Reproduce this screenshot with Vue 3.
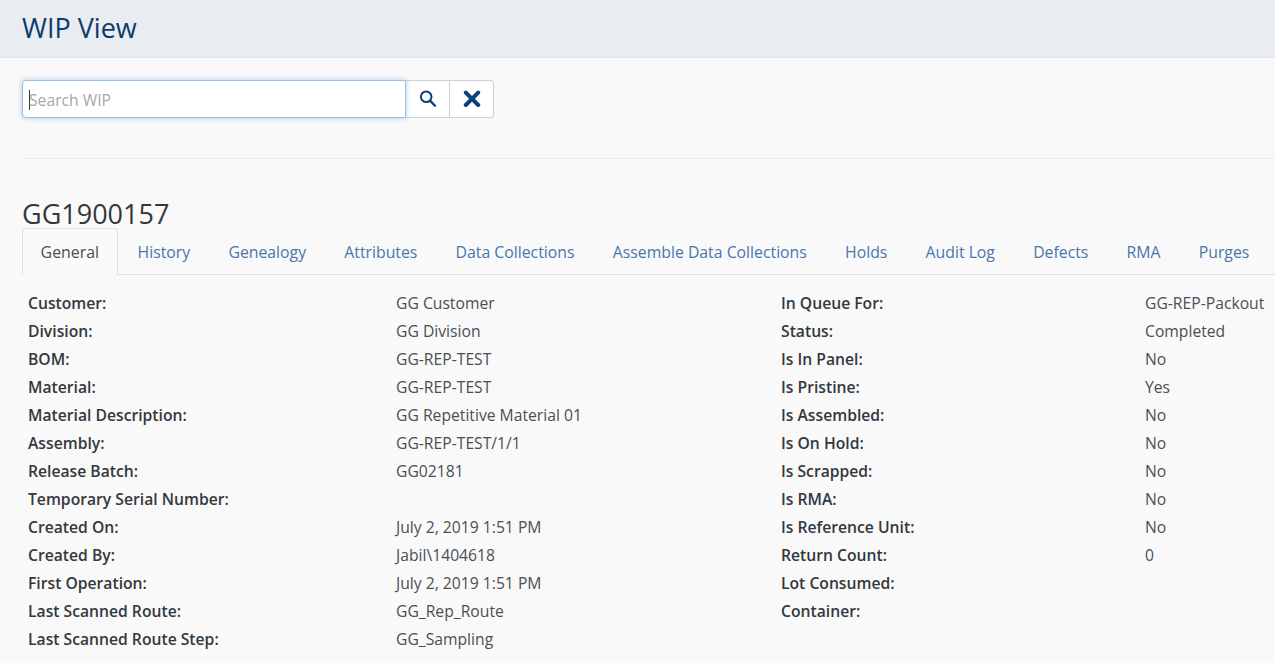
<template>
  <div class="page">
    <header class="top">
      <h1>WIP View</h1>
    </header>
    <main class="content">
      <div class="search">
        <input class="search-input" type="text" placeholder="Search WIP" />
        <span class="caret"></span>
        <button class="search-btn" type="button" aria-label="Search">
          <svg width="18" height="18" viewBox="0 0 18 18">
            <circle cx="7.2" cy="6.7" r="5.3" fill="none" stroke="#0b4076" stroke-width="2" />
            <path d="M11 10.6 L16 15.7" stroke="#0b4076" stroke-width="2.3" stroke-linecap="round" />
          </svg>
        </button>
        <button class="search-btn" type="button" aria-label="Clear">
          <svg width="18" height="18" viewBox="0 0 18 18">
            <path d="M2.8 2.6 L15.2 15 M15.2 2.6 L2.8 15" stroke="#0b4076" stroke-width="4" stroke-linecap="round" />
          </svg>
        </button>
      </div>
      <hr class="divider" />
      <h2 class="wip-id">GG1900157</h2>
      <ul class="tabs">
        <li v-for="(tab, i) in tabs" :key="tab" :class="['tab', { active: i === 0 }]">{{ tab }}</li>
      </ul>
      <div class="details">
        <template v-for="row in rows" :key="row[0]">
          <div class="label">{{ row[0] }}</div>
          <div class="value">{{ row[1] }}</div>
          <div class="label">{{ row[2] }}</div>
          <div class="value">{{ row[3] }}</div>
        </template>
      </div>
    </main>
  </div>
</template>

<script setup>
const tabs = ['General', 'History', 'Genealogy', 'Attributes', 'Data Collections', 'Assemble Data Collections', 'Holds', 'Audit Log', 'Defects', 'RMA', 'Purges']

const rows = [
  ['Customer:', 'GG Customer', 'In Queue For:', 'GG-REP-Packout'],
  ['Division:', 'GG Division', 'Status:', 'Completed'],
  ['BOM:', 'GG-REP-TEST', 'Is In Panel:', 'No'],
  ['Material:', 'GG-REP-TEST', 'Is Pristine:', 'Yes'],
  ['Material Description:', 'GG Repetitive Material 01', 'Is Assembled:', 'No'],
  ['Assembly:', 'GG-REP-TEST/1/1', 'Is On Hold:', 'No'],
  ['Release Batch:', 'GG02181', 'Is Scrapped:', 'No'],
  ['Temporary Serial Number:', '', 'Is RMA:', 'No'],
  ['Created On:', 'July 2, 2019 1:51 PM', 'Is Reference Unit:', 'No'],
  ['Created By:', 'Jabil\\1404618', 'Return Count:', '0'],
  ['First Operation:', 'July 2, 2019 1:51 PM', 'Lot Consumed:', ''],
  ['Last Scanned Route:', 'GG_Rep_Route', 'Container:', ''],
  ['Last Scanned Route Step:', 'GG_Sampling', '', ''],
]
</script>

<style>
html, body {
  overflow: hidden;
  background: #f9f9fa;
}
</style>

<style scoped>
.page {
  font-family: "Open Sans", sans-serif;
  font-size: 15.7px;
  color: #3a3f44;
  background: #f9f9fa;
  height: 663px;
  overflow: hidden;
}

.top {
  height: 57px;
  background: #e9ecf1;
  border-bottom: 1px solid #dfe3e8;
  padding-left: 22px;
  display: flex;
  align-items: center;
}

.top h1 {
  margin: -2px 0 0;
  font-size: 27px;
  font-weight: 400;
  color: #0b3c6b;
}

.content {
  padding: 22px 0 0 22px;
}

.search {
  display: flex;
  position: relative;
  width: 472px;
  height: 38px;
}

.search-input {
  width: 384px;
  height: 38px;
  box-sizing: border-box;
  margin: 0;
  padding: 2px 6px 0;
  border: 1px solid #9cbfe3;
  border-radius: 4px 0 0 4px;
  box-shadow: 0 0 4px 1px rgba(90, 150, 215, 0.35);
  background: #fff;
  font-family: inherit;
  font-size: 15.7px;
  outline: none;
  position: relative;
  z-index: 1;
}

.search-input::placeholder {
  color: #a3a7ab;
}

.caret {
  position: absolute;
  left: 7px;
  top: 10px;
  width: 1px;
  height: 20px;
  background: #33383d;
  z-index: 2;
}

.search-btn {
  width: 44px;
  height: 38px;
  margin: 0;
  padding: 0;
  background: #fff;
  border: 1px solid #ced2d6;
  border-left: none;
  display: flex;
  align-items: center;
  justify-content: center;
}

.search-btn:last-child {
  border-radius: 0 4px 4px 0;
}

.divider {
  margin: 40px 0 0;
  border: none;
  border-top: 1px solid #edeef0;
}

.wip-id {
  margin: 40px 0 0;
  font-size: 27px;
  line-height: 30px;
  font-weight: 400;
  color: #33383d;
}

.tabs {
  list-style: none;
  margin: -1px 0 0;
  padding: 0;
  display: flex;
  height: 47px;
  box-sizing: border-box;
  border-bottom: 1px solid #dcdfe3;
}

.tab {
  padding: 14px 19.1px 0;
  height: 47px;
  box-sizing: border-box;
  font-size: 15.8px;
  line-height: 20px;
  color: #4a76ab;
  white-space: nowrap;
}

.tab.active {
  color: #4a4f54;
  font-size: 15.9px;
  background: #fafafb;
  border: 1px solid #dcdfe3;
  border-bottom: 1px solid #fafafb;
  border-radius: 4px 4px 0 0;
  padding: 13px 17.6px 0;
  margin-right: 0.8px;
}

.details {
  display: grid;
  grid-template-columns: 368px 385px 364px 1fr;
  grid-auto-rows: 28px;
  margin: 14px 0 0 6px;
  line-height: 28px;
  white-space: nowrap;
}

.label {
  font-weight: 600;
  color: #33383d;
}

.value {
  color: #4a4f54;
}
</style>
